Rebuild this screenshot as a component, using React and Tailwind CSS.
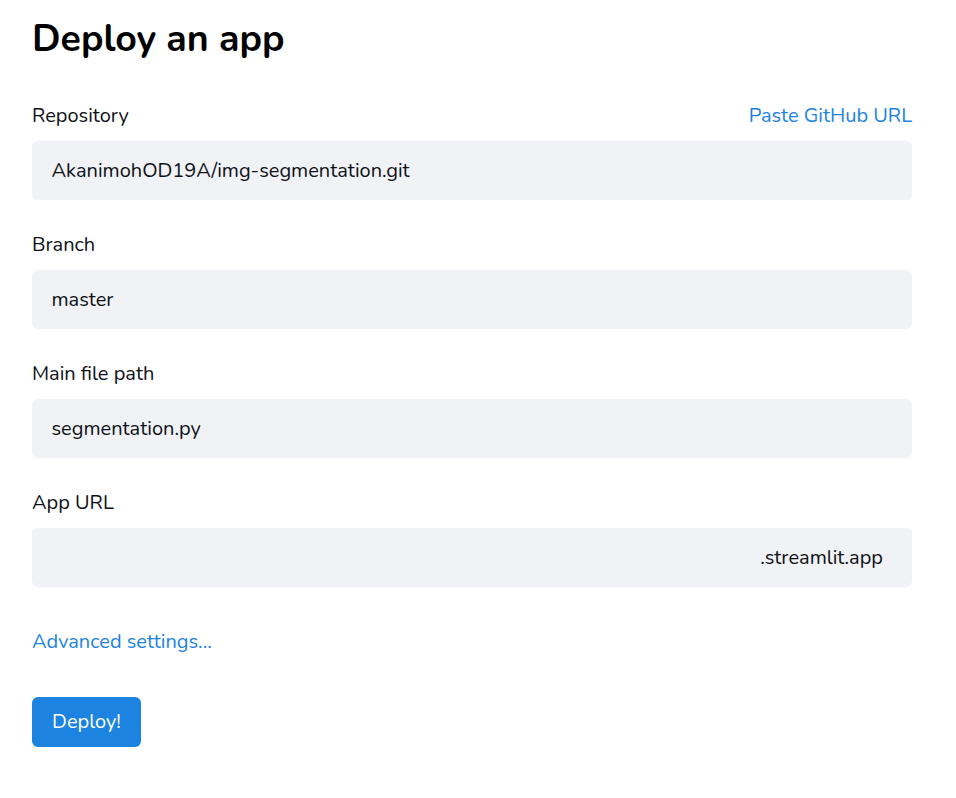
const font = "font-['Nunito','Lato','Noto_Sans',sans-serif]";
function Field({ label, value, right, end }) {
  return (
    <div className="mb-[33px]">
      <div className="flex justify-between items-center h-[24px] mb-[13px] text-[20px] text-[#0e1117]">
        <span>{label}</span>
        {right && <a className="text-[#1c83e1]">{right}</a>}
      </div>
      <div className={`h-[59px] rounded-[6px] bg-[#f0f2f6] flex items-center text-[20px] text-[#0e1117] ${end ? "justify-end pr-[29px]" : "pl-[19.5px]"}`}>
        {value}
      </div>
    </div>
  );
}
export default function App() {
  return (
    <div className={`${font} w-[956px] h-[798px] bg-white pl-8 pr-11 pt-[14px] overflow-hidden`}>
      <h1 className="text-[37.5px] leading-[50px] font-bold text-black mb-[40px]">Deploy an app</h1>
      <Field label="Repository" right="Paste GitHub URL" value="AkanimohOD19A/img-segmentation.git" />
      <Field label="Branch" value="master" />
      <Field label="Main file path" value="segmentation.py" />
      <Field label="App URL" value=".streamlit.app" end />
      <a className="block text-[20px] leading-[22px] text-[#1c83e1] mt-[44px]">Advanced settings...</a>
      <button className="mt-[44px] w-[109px] h-[50px] rounded-[6px] bg-[#1c83e1] text-white text-[20px]">Deploy!</button>
    </div>
  );
}
